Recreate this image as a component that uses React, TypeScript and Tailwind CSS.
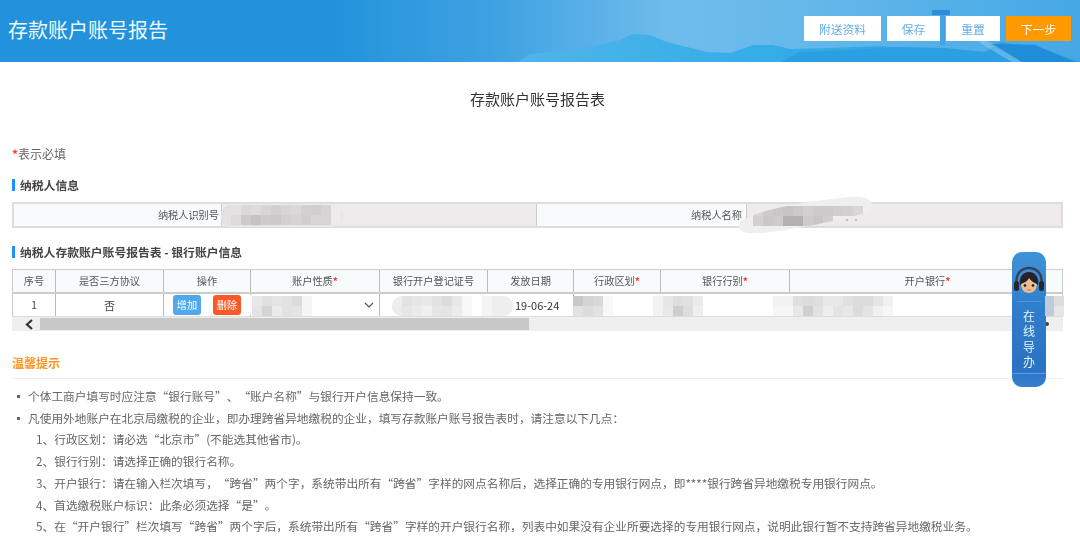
const CJK = "font-['Noto_Sans_CJK_SC','Noto_Sans',sans-serif]";

function Mosaic({ cells, size = 10 }: { cells: string[][]; size?: number }) {
  return (
    <div className="flex flex-col blur-[0.6px]">
      {cells.map((row, i) => (
        <div key={i} className="flex">
          {row.map((c, j) => (
            <div key={j} style={{ width: size, height: size, background: c }} />
          ))}
        </div>
      ))}
    </div>
  );
}

function SectionTitle({ children }: { children: React.ReactNode }) {
  return (
    <div className="flex items-center h-[12px]">
      <div className="w-[3px] h-[12px] bg-[#1e90ff] mr-[5px]" />
      <span className="text-[11.8px] font-bold text-[#444]">{children}</span>
    </div>
  );
}

function Star() {
  return <span className="text-[#f33] font-bold">*</span>;
}

function Quoted({ text }: { text: string }) {
  return (
    <>
      {text.split(/([“”、])/).map((part, i) =>
        /[“”、]/.test(part) ? (
          <span key={i} className="inline-block w-[1em] text-center">{part}</span>
        ) : (
          <span key={i}>{part}</span>
        ),
      )}
    </>
  );
}

const heads: [string, number, boolean][] = [
  ["序号", 43, false],
  ["是否三方协议", 108, false],
  ["操作", 87, false],
  ["账户性质", 129, true],
  ["银行开户登记证号", 108, false],
  ["发放日期", 86, false],
  ["行政区划", 87, true],
  ["银行行别", 129, true],
  ["开户银行", 275, true],
];

const tips = [
  "个体工商户填写时应注意“银行账号”、“账户名称”与银行开户信息保持一致。",
  "凡使用外地账户在北京局缴税的企业，即办理跨省异地缴税的企业，填写存款账户账号报告表时，请注意以下几点：",
];
const subs = [
  "1、行政区划：请必选“北京市”(不能选其他省市)。",
  "2、银行行别：请选择正确的银行名称。",
  "3、开户银行：请在输入栏次填写，“跨省”两个字，系统带出所有“跨省”字样的网点名称后，选择正确的专用银行网点，即****银行跨省异地缴税专用银行网点。",
  "4、首选缴税账户标识：此条必须选择“是”。",
  "5、在“开户银行”栏次填写“跨省”两个字后，系统带出所有“跨省”字样的开户银行名称，列表中如果没有企业所要选择的专用银行网点，说明此银行暂不支持跨省异地缴税业务。",
];

export default function App() {
  return (
    <div className={`relative w-[1080px] h-[548px] overflow-hidden bg-white ${CJK}`}>
      <header className="relative h-[62px] flex items-start justify-between pl-[8px] pr-[9px] overflow-hidden bg-[linear-gradient(90deg,#2192db_0%,#2192db_30%,#3fa2e2_46%,#6fbcec_62%,#66b8ea_74%,#4fade7_92%,#45a8e5_100%)]">
        <svg className="absolute inset-0" width="1080" height="62" viewBox="0 0 1080 62">
          <defs>
            <linearGradient id="mtn" x1="0" y1="0" x2="1" y2="0">
              <stop offset="0" stopColor="#4fb4ea" />
              <stop offset="0.5" stopColor="#35ade8" />
              <stop offset="1" stopColor="#2aa3e2" />
            </linearGradient>
          </defs>
          <path d="M518 62 L530 54 L577 50 L620 40 L633 34 L650 35 L667 42 L707 52 L730 53 L753 45 L773 45 L790 49 L830 48 L880 46 L930 50 L1000 62 Z" fill="url(#mtn)" />
          <path d="M780 62 L800 52 L850 50 L900 47 L945 48 L985 52 L1000 42 L1040 48 L1080 62 Z" fill="#2c9fe2" />
          <path d="M990 44 L1035 45 L1075 62 L1020 62 Z" fill="#1f8dd8" />
          <path d="M932 10 h18 v5 h-18 z" fill="#2a8ed8" />
          <path d="M940 15 h5 v30 h-5 z" fill="#3fa0e2" opacity="0.7" />
          <path d="M978 42 L986 40 L1022 62 L1012 62 Z" fill="#8ecdf1" opacity="0.5" />
        </svg>
        <h1 className="relative text-[20px] leading-[60px] text-[#eef8ff] font-normal">存款账户账号报告</h1>
        <div className="relative mt-[16px] flex gap-[6px] text-[11.8px] text-[#63aee8] blur-[0.3px]">
          <button className="w-[77px] h-[25px] bg-white">附送资料</button>
          <button className="w-[53px] h-[25px] bg-white">保存</button>
          <button className="w-[54px] h-[25px] bg-white">重置</button>
          <button className="w-[65px] h-[25px] bg-[#ff9900] text-white">下一步</button>
        </div>
      </header>

      <main className="px-[12px] pr-[17px] blur-[0.35px]">
        <h2 className="text-[15px] font-normal text-[#333] text-center pt-[27px] leading-[20px]">存款账户账号报告表</h2>
        <div className="text-[12px] text-[#666] mt-[37px] leading-[16px]"><Star />表示必填</div>

        <div className="mt-[17px]"><SectionTitle>纳税人信息</SectionTitle></div>
        <div className="mt-[11px] flex h-[26px] border-2 border-[#dddddd] text-[10.2px] text-[#555]">
          <div className="w-[208px] bg-[#f7fbfc] flex items-center justify-end pr-[2px] border-r border-[#ccc]">纳税人识别号</div>
          <div className="w-[315px] bg-[#efebec] border-r border-[#ccc]" />
          <div className="w-[210px] bg-[#f7fbfc] flex items-center justify-end pr-[4px] border-r border-[#ccc]">纳税人名称</div>
          <div className="flex-1 bg-[#efebec]" />
        </div>

        <div className="mt-[18px]"><SectionTitle>纳税人存款账户账号报告表 - 银行账户信息</SectionTitle></div>

        <div className="mt-[11px] border-x border-t border-[#ccc] text-[10.2px] text-[#555]">
          <div className="flex h-[24px] bg-[#f7fbfc] border-b-2 border-[#ccc]">
            {heads.map(([t, w, req], i) => (
              <div key={t} style={{ width: w }} className={`shrink-0 flex items-center justify-center ${i < heads.length - 1 ? "border-r border-[#bbb]" : ""}`}>
                {t}{req && <Star />}
              </div>
            ))}
          </div>
          <div className="flex h-[22px] items-center text-[#444]">
            <div className="w-[43px] h-full flex items-center justify-center border-r border-[#bbb]">1</div>
            <div className="w-[108px] h-full flex items-center justify-center border-r border-[#bbb] text-[11px]">否</div>
            <div className="w-[87px] h-full flex items-center justify-center gap-[12px] border-r border-[#bbb]">
              <button className="w-[28px] h-[20px] rounded-[3px] bg-[#52a8ee] text-white text-[10.2px]">增加</button>
              <button className="w-[28px] h-[20px] rounded-[3px] bg-[#fb5a26] text-white text-[10.2px]">删除</button>
            </div>
            <div className="w-[129px] h-full flex items-center justify-end pr-[5px] border-r border-[#bbb] text-[#555]">
              <svg width="10" height="6" viewBox="0 0 10 6" fill="none" stroke="#555" strokeWidth="1.2"><path d="M1 1l4 4 4-4" /></svg>
            </div>
            <div className="w-[108px] h-full" />
            <div className="w-[86px] h-full flex items-center pl-[27px] border-r border-[#bbb] text-[11px] text-[#333]">19-06-24</div>
            <div className="flex-1 h-full" />
          </div>
        </div>
        <div className="h-[15px] bg-[#efefef] border-t border-[#ddd] relative flex items-center">
          <svg className="ml-[13px] shrink-0" width="9" height="11" viewBox="0 0 9 11" fill="none" stroke="#333" strokeWidth="2.2"><path d="M7 1L2 5.5l5 4.5" /></svg>
          <div className="ml-[6px] w-[489px] h-[12px] bg-[#c8c8c8]" />
        </div>

        <div className="mt-[24px] text-[12px] font-bold text-[#ff9526] leading-[16px]">温馨提示</div>
        <div className="mt-[7px] border-t border-[#eee]" />
        <div className="mt-[6px] text-[11.7px] text-[#666]">
          {tips.map((t) => (
            <div key={t} className="h-[21.7px] flex items-center whitespace-nowrap">
              <span className="w-[3px] h-[3px] mt-[2px] bg-[#666] ml-[5px] mr-[8px]" /><span><Quoted text={t} /></span>
            </div>
          ))}
          {subs.map((t) => (
            <div key={t} className="h-[21.7px] flex items-center whitespace-nowrap pl-[24px]"><span><Quoted text={t} /></span></div>
          ))}
        </div>
      </main>

      {/* redaction patches */}
      <div className="absolute left-[221px] top-[205px] w-[122px] h-[22px] rounded-[10px] bg-[#eae6e7] overflow-hidden"><Mosaic size={10} cells={[["#e3dfe0","#e6e2e3","#dcd8d9","#e0dcdd","#d9d5d6","#d4d0d1","#d9d5d6","#dcd8d9","#d4d0d1","#d2ced0","#d8d4d5","#efebec"],["#e6e2e3","#dfdbdc","#cdc9ca","#c6c2c3","#cfcbcc","#cdc9ca","#d4d0d1","#d8d4d5","#d2ced0","#d9d5d6","#d8d4d5","#efebec"]]} /></div>
      <svg className="absolute left-[730px] top-[190px] blur-[0.6px]" width="160" height="50" viewBox="730 190 160 50">
        <defs>
          <clipPath id="smudge">
            <path d="M742 220 C760 210 800 202 850 197 C870 195 876 204 870 212 C840 220 790 231 760 233 C742 235 734 228 742 220 Z" />
          </clipPath>
        </defs>
        <path d="M742 220 C760 210 800 202 850 197 C870 195 876 204 870 212 C840 220 790 231 760 233 C742 235 734 228 742 220 Z" fill="#f0eeee" />
        <g clipPath="url(#smudge)">
          <rect x="753" y="206" width="10" height="10" fill="#d8d4d5" />
          <rect x="763" y="206" width="10" height="10" fill="#cfcbcc" />
          <rect x="773" y="206" width="10" height="10" fill="#cbc7c8" />
          <rect x="783" y="206" width="10" height="10" fill="#c8c4c5" />
          <rect x="793" y="206" width="10" height="10" fill="#cdc9ca" />
          <rect x="803" y="206" width="10" height="10" fill="#d4d0d1" />
          <rect x="813" y="206" width="10" height="10" fill="#cfcbcc" />
          <rect x="823" y="206" width="10" height="10" fill="#cecacb" />
          <rect x="833" y="206" width="10" height="10" fill="#d2ced0" />
          <rect x="843" y="206" width="10" height="10" fill="#d4d0d1" />
          <rect x="853" y="206" width="10" height="10" fill="#dad6d7" />
          <rect x="753" y="216" width="10" height="10" fill="#d4d0d1" />
          <rect x="763" y="216" width="10" height="10" fill="#cbc7c8" />
          <rect x="773" y="216" width="10" height="10" fill="#cfcbcc" />
          <rect x="783" y="216" width="20" height="10" fill="#b5b1b2" />
          <rect x="803" y="216" width="10" height="10" fill="#cfcbcc" />
          <rect x="813" y="216" width="10" height="10" fill="#c9c5c6" />
          <rect x="823" y="216" width="10" height="10" fill="#d2ced0" />
        </g>
        <path d="M846 220h2M855 220l2 0" stroke="#555" strokeWidth="1" opacity="0.6" />
      </svg>
      <div className="absolute left-[245px] top-[294px] w-[100px] h-[22px] bg-white/90 rounded-[10px] overflow-hidden pl-[7px] pt-[2px]"><Mosaic size={10} cells={[["#e8e8e8","#e0e0e0","#e4e4e4","#e2e2e2","#dcdcdc","#f5f5f5"],["#e4e4e4","#d4d4d4","#ebebeb","#e2e2e2","#e4e4e4","#f5f5f5"]]} /></div>
      <div className="absolute left-[392px] top-[296px] w-[121px] h-[20px] rounded-[10px] bg-[#f0f0f0] overflow-hidden"><Mosaic size={10} cells={[["#eeeeee","#e2e2e2","#e6e6e6","#e8e8e8","#e2e2e2","#dcdcdc","#e8e8e8","#f8f8f8","#ffffff","#f4f4f4","#eeeeee","#eeeeee"],["#ebebeb","#e6e6e6","#ebebeb","#f0f0f0","#e6e6e6","#e4e4e4","#ececec","#f8f8f8","#ffffff","#f4f4f4","#eeeeee","#eeeeee"]]} /></div>
      <div className="absolute left-[573px] top-[296px] w-[220px] h-[20px] bg-white overflow-hidden"><Mosaic size={10} cells={[["#c8c8c8","#d4d4d4","#d8d8d8","#f8f8f8","#fff","#fff","#fff","#fff","#f2f2f2","#e6e6e6","#dedede","#e0e0e0","#eaeaea","#fff","#fff","#fff","#fff","#fff","#fff","#fff","#f2f2f2","#f2f2f2"],["#e2e2e2","#dcdcdc","#e2e2e2","#f8f8f8","#fff","#fff","#fff","#fff","#f2f2f2","#e8e8e8","#cecece","#dedede","#efefef","#fff","#fff","#fff","#fff","#fff","#fff","#fff","#f6f6f6","#f6f6f6"]]} /></div>
      <div className="absolute left-[793px] top-[296px] w-[100px] h-[20px] bg-white overflow-hidden"><Mosaic size={10} cells={[["#e0e0e0","#dcdcdc","#dedede","#e8e8e8","#e8e8e8","#e0e0e0","#dcdcdc","#dcdcdc","#e4e4e4","#f0f0f0"],["#e8e8e8","#d0d0d0","#e2e2e2","#eeeeee","#e4e4e4","#e8e8e8","#dcdcdc","#e4e4e4","#f0f0f0","#f6f6f6"]]} /></div>

      {/* online guide widget */}
      <div className="absolute left-[1012px] top-[252px] w-[34px] h-[135px] rounded-[10px] bg-[linear-gradient(180deg,#3d93da_0%,#2f7cca_45%,#2a73c4_85%,#3480cf_100%)] flex flex-col items-center">
        <svg className="mt-[14px] shrink-0" width="34" height="28" viewBox="0 0 34 28">
          <path d="M4.5 17C3.5 6 11 2 17 2s13.5 4 12.5 15" fill="none" stroke="#39414f" strokeWidth="2.4" />
          <path d="M8 19C6.5 10 12 6 17 6s10.5 4 9 13z" fill="#2a2128" />
          <path d="M9 18c3-1 7-3 8-6 2 3 5 5 8 6 0 5-3 9-8 9s-8-4-8-9z" fill="#ecbd92" />
          <circle cx="13" cy="19.5" r="1.3" fill="#1e1a1c" />
          <circle cx="21" cy="19.5" r="1.3" fill="#1e1a1c" />
          <path d="M15.5 24h3" stroke="#b85a3a" strokeWidth="1" />
          <rect x="2" y="15" width="5" height="10" rx="2.5" fill="#23272e" />
          <rect x="27" y="15" width="5" height="10" rx="2.5" fill="#23272e" />
        </svg>
        <div className="mt-[7px] w-[24px] border-t border-[#4f97d8]" />
        <div className="mt-[6px] flex flex-col items-center text-[12px] leading-[15.3px] text-[#e8f3ff] blur-[0.2px]">
          <span>在</span><span>线</span><span>导</span><span>办</span>
        </div>
        <div className="mt-auto mb-[13px] w-full border-t border-[#5a9fdc]" />
      </div>
      <div className="absolute left-[1045px] top-[296px] w-[19px] h-[20px] flex blur-[0.5px]">
        <div className="w-[9px] bg-[#bfcbd8]" />
        <div className="flex-1 flex flex-col">
          <div className="h-[10px] bg-[#dddddd]" />
          <div className="flex-1 bg-[#e6e6e6]" />
        </div>
      </div>
      <div className="absolute left-[1046px] top-[322px] w-[3px] h-[4px] bg-[#444] blur-[0.4px] rounded-r-[2px]" />
    </div>
  );
}
